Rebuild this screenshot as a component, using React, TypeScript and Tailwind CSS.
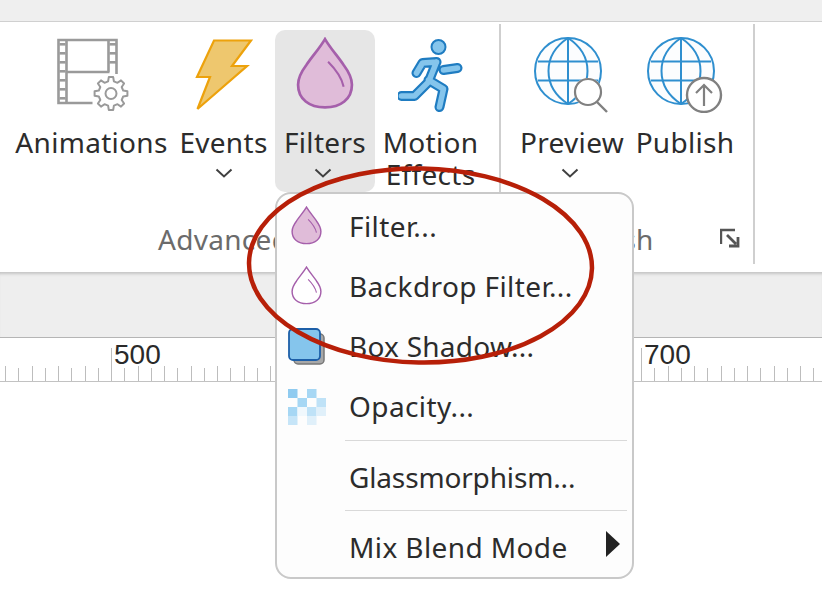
const textFont = "font-['Noto_Sans','Open_Sans',sans-serif]";

function gearPath(cx: number, cy: number, outer: number, inner: number, teeth: number) {
  const step = (Math.PI * 2) / teeth;
  const pts: string[] = [];
  for (let i = 0; i < teeth; i++) {
    const a = i * step - Math.PI / 2;
    const corners = [
      [inner, a - step * 0.3],
      [outer, a - step * 0.17],
      [outer, a + step * 0.17],
      [inner, a + step * 0.3],
    ];
    corners.forEach(([r, t]) => pts.push(`${(cx + r * Math.cos(t)).toFixed(1)} ${(cy + r * Math.sin(t)).toFixed(1)}`));
  }
  return `M${pts.join("L")}z`;
}

function Chevron() {
  return (
    <svg width="18" height="10" viewBox="0 0 18 10" className="block">
      <path d="M1.5 1.5 9 8.5l7.5-7" fill="none" stroke="#404040" strokeWidth="2" />
    </svg>
  );
}

function FilmIcon() {
  const holes = [43, 52, 61, 70, 79, 88, 97];
  return (
    <svg width="76" height="76" viewBox="53.500 37 76 76" className="block">
      <path d="M92 103H58V40h58v34" fill="none" stroke="#9a9a9a" strokeWidth="2.600" />
      <path d="M66 40v63M108 40v32M66 72h43" fill="none" stroke="#9a9a9a" strokeWidth="2.600" />
      {holes.map((y) => (
        <rect key={y} x="59" y={y} width="6" height="2.600" fill="#9a9a9a" />
      ))}
      {holes.slice(0, 3).map((y) => (
        <rect key={y} x="109" y={y} width="7" height="2.600" fill="#9a9a9a" />
      ))}
      <path d={gearPath(110.5, 93.5, 16.5, 12.5, 8)} fill="#fff" stroke="#9a9a9a" strokeWidth="2" strokeLinejoin="round" />
      <circle cx="110.500" cy="93.500" r="5.500" fill="none" stroke="#9a9a9a" strokeWidth="2" />
    </svg>
  );
}

function BoltIcon() {
  return (
    <svg width="62" height="74" viewBox="193 37 62 74" className="block">
      <path
        d="M214 39.500h37L232 65h15l-49.500 43L210 76h-13z"
        fill="#eec76e"
        stroke="#eda20c"
        strokeWidth="2.200"
      />
    </svg>
  );
}

function Drop({ size, fill, highlight, className = "" }: { size: number; fill: string; highlight?: boolean; className?: string }) {
  return (
    <svg width={size} height={size * 1.25} viewBox="0 0 56 70" className={`block ${className}`}>
      <path
        d="M28 2C34 12 40 18 46 27C52 35 54 41 54 46C54 60 43 68 28 68C13 68 2 60 2 46C2 41 4 35 10 27C16 18 22 12 28 2z"
        fill={fill}
        stroke="#a55fab"
        strokeWidth="2.600"
      />
      {highlight ? (
        <path d="M31 24c6 6 13 15 15 24" fill="none" stroke="#a55fab" strokeWidth="2" />
      ) : null}
    </svg>
  );
}

function RunnerIcon() {
  const limbs = "M416 72l6-10 14-1M436 61l-8 20-7 7-7 7H401M428 79l15 9-4 18M443 69l14-2";
  return (
    <svg width="66" height="74" viewBox="397.500 37 66 74" className="block">
      <path d={limbs} fill="none" stroke="#1f7cc1" strokeWidth="10" strokeLinecap="round" strokeLinejoin="round" />
      <path d={limbs} fill="none" stroke="#85c5ec" strokeWidth="5.600" strokeLinecap="round" strokeLinejoin="round" />
      <circle cx="438" cy="46" r="7" fill="#85c5ec" stroke="#1f7cc1" strokeWidth="2" />
    </svg>
  );
}

function Globe() {
  return (
    <g fill="none" stroke="#2f8fcf" strokeWidth="2">
      <circle cx="34" cy="34" r="33" fill="#fcfdfe" />
      <path d="M34 1v66M4 24.500h60M4 43.500h60" />
      <path d="M34 1C8 18 8 50 34 67M34 1c26 17 26 49 0 66" />
    </g>
  );
}

function PreviewIcon() {
  return (
    <svg width="78" height="76" viewBox="-1 0 78 76" className="block">
      <Globe />
      <circle cx="54" cy="55" r="14" fill="#fff" stroke="none" />
      <circle cx="54" cy="55" r="13" fill="#fff" stroke="#808080" strokeWidth="2.200" />
      <path d="M63 65l10 10" stroke="#808080" strokeWidth="2.400" />
    </svg>
  );
}

function PublishIcon() {
  return (
    <svg width="78" height="76" viewBox="-1 0 78 76" className="block">
      <Globe />
      <circle cx="57" cy="58" r="17" fill="#fff" stroke="#808080" strokeWidth="2.400" />
      <path d="M57 69V48M49 56l8-8 8 8" fill="none" stroke="#808080" strokeWidth="2.200" />
    </svg>
  );
}

function BoxShadowIcon() {
  return (
    <svg width="38" height="38" viewBox="0 0 38 38" className="block">
      <rect x="6" y="6" width="30" height="30" rx="4" fill="#a8a8a8" stroke="#777" strokeWidth="1.500" />
      <rect x="1" y="1" width="31" height="31" rx="4" fill="#85c5ec" stroke="#1d5fa8" strokeWidth="1.800" />
    </svg>
  );
}

function OpacityIcon() {
  const cells = [
    [0, 0, "#8fcbf0"], [2, 0, "#a6d7f4"],
    [1, 1, "#a6d7f4"], [3, 1, "#bfe2f7"],
    [0, 2, "#a6d7f4"], [1, 2, "#f0f8fd"], [2, 2, "#bfe2f7"], [3, 2, "#e0f0fa"],
    [0, 3, "#c6e5f8"], [2, 3, "#e0f0fa"],
  ] as const;
  return (
    <svg width="38" height="36" viewBox="0 0 38 36" className="block">
      {cells.map(([c, r, color]) => (
        <rect key={`${c}-${r}`} x={c * 9.500} y={r * 9} width="9.500" height="9" fill={color} />
      ))}
    </svg>
  );
}

function RibbonButton({
  icon,
  label,
  second,
  chevron,
  chevronClass = "",
  active,
  className,
}: {
  icon: React.ReactNode;
  label: string;
  second?: string;
  chevron?: boolean;
  chevronClass?: string;
  active?: boolean;
  className: string;
}) {
  return (
    <div className={`flex h-[162px] flex-col items-center rounded-[10px] ${active ? "bg-[#e6e6e6]" : ""} ${className}`}>
      <div className="mt-[7px] flex h-[76px] items-center justify-center">{icon}</div>
      <div className="mt-[13px] text-center text-[28px] leading-[32px] tracking-[0.3px] whitespace-nowrap text-[#2c2c2c]">
        {label}
        {second ? <div>{second}</div> : null}
      </div>
      {chevron ? (
        <div className={`mt-[10px] ${chevronClass}`}>
          <Chevron />
        </div>
      ) : null}
    </div>
  );
}

function Ruler() {
  const ticks = Array.from({ length: 62 }, (_, i) => 5 + i * 13.25);
  return (
    <svg width="822" height="44" className="block">
      {ticks.map((x, i) => {
        const major = i % 40 === 8;
        const top = major ? 10 : i % 2 === 0 ? 28 : 30;
        return <path key={i} d={`M${Math.round(x) + 0.5} ${top}V43`} stroke="#bdbdbd" strokeWidth="1" />;
      })}
      <path d="M0 43.500H822" stroke="#c2c2c2" strokeWidth="1" />
      <text x="114" y="26" fontFamily="Liberation Sans, sans-serif" fontSize="28" fill="#2a2a2a">500</text>
      <text x="644" y="26" fontFamily="Liberation Sans, sans-serif" fontSize="28" fill="#2a2a2a">700</text>
    </svg>
  );
}

function MenuRow({
  icon,
  label,
  arrow,
  labelClass = "tracking-[0.4px]",
  className,
}: {
  icon?: React.ReactNode;
  label: string;
  arrow?: boolean;
  labelClass?: string;
  className: string;
}) {
  return (
    <div className={`flex items-center ${className}`}>
      <div className="flex w-[72px] shrink-0 items-center justify-center pr-[13px]">{icon}</div>
      <div className={`mb-[2px] flex-1 text-[28px] leading-[32px] whitespace-nowrap text-[#2c2c2c] ${labelClass}`}>{label}</div>
      {arrow ? (
        <svg width="14" height="26" viewBox="0 0 14 26" className="mr-[12px] mb-[8px] block">
          <path d="M0 0l14 13L0 26z" fill="#222" />
        </svg>
      ) : null}
    </div>
  );
}

export default function App() {
  return (
    <div className={`relative h-[610px] w-[822px] overflow-hidden bg-white ${textFont}`}>
      <div className="h-[22px] border-b border-[#d0d0d0] bg-[#efefef]" />

      <div className="flex h-[250px] bg-white">
        <div className="flex w-[499px] shrink-0 flex-col">
          <div className="flex pt-[8px] pl-[16px]">
            <RibbonButton icon={<FilmIcon />} label="Animations" className="w-[151px]" />
            <RibbonButton icon={<BoltIcon />} label="Events" chevron className="ml-[5px] w-[103px]" />
            <RibbonButton icon={<Drop size={58} fill="#e0bcd9" highlight className="mb-[4px]" />} label="Filters" chevron chevronClass="mr-[4px]" active className="w-[100px]" />
            <RibbonButton icon={<RunnerIcon />} label="Motion" second="Effects" className="ml-[3px] w-[105px]" />
          </div>
          <div className="pt-[31px] pl-[158px] text-[28px] leading-[32px] tracking-[0.3px] whitespace-nowrap text-[#6b6b6b]">Advanced</div>
        </div>

        <div className="mt-[2px] h-[240px] w-[2px] shrink-0 bg-[#cfcfcf]" />

        <div className="flex w-[252px] shrink-0 flex-col">
          <div className="flex pt-[8px] pl-[12px]">
            <RibbonButton icon={<PreviewIcon />} label="Preview" chevron chevronClass="mr-[4px]" className="w-[118px]" />
            <RibbonButton icon={<PublishIcon />} label="Publish" className="w-[108px]" />
          </div>
          <div className="flex items-center pt-[31px] pl-[54px]">
            <span className="text-[28px] leading-[32px] tracking-[0.3px] whitespace-nowrap text-[#6b6b6b]">Publish</span>
            <svg width="20" height="20" viewBox="0 0 20 20" className="mb-[3px] ml-[66px] block">
              <path d="M1 16V2h14" fill="none" stroke="#555" strokeWidth="2.400" />
              <path d="M7 7l9 9M18 9v9h-9" fill="none" stroke="#555" strokeWidth="2.800" />
            </svg>
          </div>
        </div>

        <div className="mt-[2px] h-[240px] w-[2px] shrink-0 bg-[#cfcfcf]" />
      </div>

      <div className="h-[66px] border-b border-[#b5b5b5] bg-[#eeeeee] shadow-[inset_0_4px_3px_-2px_#c4c4c4]" />
      <Ruler />

      <div className="absolute top-[192px] left-[275px] h-[387px] w-[359px] rounded-[16px] border-2 border-[#c9c9c9] bg-[#fdfdfd] pt-[3px]">
        <MenuRow icon={<Drop size={31} fill="#e0bcd9" highlight className="mb-[3px]" />} label="Filter..." className="h-[60px]" />
        <MenuRow icon={<Drop size={31} fill="#ffffff" highlight className="mb-[3px]" />} label="Backdrop Filter..." className="h-[60px]" />
        <MenuRow icon={<BoxShadowIcon />} label="Box Shadow..." labelClass="tracking-[0.25px]" className="h-[60px]" />
        <MenuRow icon={<OpacityIcon />} label="Opacity..." className="h-[60px]" />
        <div className="mt-[3px] mr-[5px] ml-[68px] h-px bg-[#d9d9d9]" />
        <MenuRow label="Glassmorphism..." labelClass="tracking-[-0.15px]" className="mt-[7px] h-[60px]" />
        <div className="mt-[2px] mr-[5px] ml-[68px] h-px bg-[#d9d9d9]" />
        <MenuRow label="Mix Blend Mode" arrow className="mt-[10px] h-[54px]" />
      </div>

      <svg width="822" height="610" className="pointer-events-none absolute top-0 left-0">
        <ellipse cx="420.500" cy="265.500" rx="171.500" ry="97" transform="rotate(1 420.500 265.500)" fill="none" stroke="#b71f08" strokeWidth="4.500" />
      </svg>
    </div>
  );
}
